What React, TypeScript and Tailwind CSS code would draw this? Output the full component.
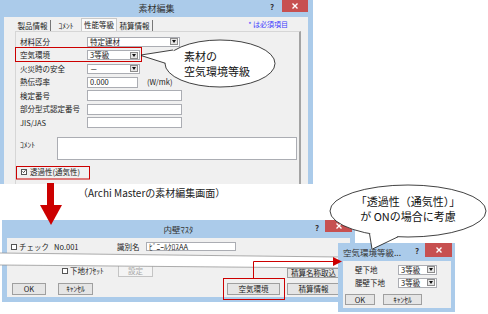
import React from "react";

const Check = ({ on }: { on?: boolean }) => (
  <span className="w-[6px] h-[6px] border border-[#555] bg-white flex items-center justify-center shrink-0">
    {on && (
      <svg width="5" height="5" viewBox="0 0 5 5">
        <path d="M0.6 2.4 L2 3.9 L4.4 0.9" stroke="#222" strokeWidth="1" fill="none" />
      </svg>
    )}
  </span>
);

const Combo = ({ cls, value }: { cls: string; value: string }) => (
  <div className={`flex items-center h-[10px] bg-white border border-[#abadb3] pl-[2px] ${cls}`}>
    <span className="leading-none">{value}</span>
    <span className="ml-auto mr-[1px] w-[8px] h-[7px] bg-[#e6e6e6] border border-[#8c8c8c] flex items-center justify-center">
      <svg width="4" height="3" viewBox="0 0 4 3">
        <path d="M0 0 H4 L2 3 Z" fill="#111" />
      </svg>
    </span>
  </div>
);

const Field = ({ cls, value }: { cls: string; value?: string }) => (
  <div className={`flex items-center h-[11px] bg-white border border-[#abadb3] pl-[2px] leading-none ${cls}`}>
    {value}
  </div>
);

const Btn = ({ cls, label, off }: { cls: string; label: string; off?: boolean }) =>
  off ? (
    <div className={`flex items-center justify-center bg-[#f4f4f4] border border-[#c4c4c4] text-[#a8a8a8] leading-none ${cls}`}>
      {label}
    </div>
  ) : (
    <div className={`flex items-center justify-center bg-[#e5e5e5] border border-[#9f9f9f] text-[#222] leading-none ${cls}`}>
      {label}
    </div>
  );

const CloseX = () => (
  <svg width="6" height="6" viewBox="0 0 6 6">
    <path d="M0.5 0.5 L5.5 5.5 M5.5 0.5 L0.5 5.5" stroke="#fff" strokeWidth="1.4" />
  </svg>
);

const Row = ({ label, children }: { label: string; children: React.ReactNode }) => (
  <div className="flex items-center h-[11px]">
    <span className="w-[71px] pl-[4px] leading-none">{label}</span>
    {children}
  </div>
);

export default function App() {
  return (
    <div className="relative w-[488px] h-[314px] bg-white overflow-hidden whitespace-nowrap font-['Noto_Sans_CJK_JP',sans-serif] text-[7.5px] text-[#222]">
      {/* 素材編集 */}
      <div className="absolute left-0 top-0 w-[313px] h-[184px] bg-[#abcbea] flex flex-col">
        <div className="relative h-[17px] flex items-center justify-center text-[9px] text-[#333]">
          素材編集
          <span className="absolute left-[270px] top-[3px] text-[8px] font-bold leading-none">?</span>
          <span className="absolute left-[282px] top-0 w-[26px] h-[12px] bg-[#c75050] flex items-center justify-center">
            <CloseX />
          </span>
        </div>
        <div className="flex-1 ml-[4px] mr-[5px] bg-[#f0f0f0] flex flex-col">
          <div className="flex items-end h-[14px] pl-[11px]">
            <span className="w-[36px] h-[11px] flex items-center justify-center border-r border-[#777] leading-none">製品情報</span>
            <span className="w-[30px] h-[11px] flex items-center justify-center leading-none">ｺﾒﾝﾄ</span>
            <span className="w-[36px] h-[13px] flex items-center justify-center bg-[#fafafa] border border-b-0 border-[#c9c9c9] leading-none">
              性能等級
            </span>
            <span className="w-[36px] h-[11px] flex items-center justify-center border-r border-[#777] leading-none">積算情報</span>
            <span className="ml-auto mr-[20px] self-center text-[7px] text-[#3c3cff] leading-none">* は必須項目</span>
          </div>
          <div className="ml-[11px] w-[286px] flex-1 border-l border-t border-[#d6d6d6] border-r-2 border-r-[#a3a3a3] pt-[4px] flex flex-col gap-[2.5px]">
            <Row label="材料区分">
              <Combo cls="w-[93px]" value="特定建材" />
            </Row>
            <Row label="空気環境">
              <Combo cls="w-[53px]" value="3等級" />
            </Row>
            <Row label="火災時の安全">
              <Combo cls="w-[53px]" value="－" />
            </Row>
            <Row label="熱伝導率">
              <Field cls="w-[51px]" value="0.000" />
              <span className="ml-[9px] leading-none">(W/mk)</span>
            </Row>
            <Row label="検定番号">
              <Field cls="w-[95px]" />
            </Row>
            <Row label="部分型式認定番号">
              <Field cls="w-[95px]" />
            </Row>
            <Row label="JIS/JAS">
              <Field cls="w-[95px]" />
            </Row>
            <div className="mt-[6px] flex items-start">
              <span className="w-[41px] pl-[4px] pt-[4px] leading-none">ｺﾒﾝﾄ</span>
              <div className="w-[240px] h-[23px] bg-white border border-[#abadb3]" />
            </div>
            <div className="mt-[4px] h-[11px] flex items-center pl-[5px] gap-[3px]">
              <Check on />
              <span className="leading-none">透過性(通気性)</span>
            </div>
          </div>
        </div>
      </div>

      <div className="absolute left-[78px] top-[186px] text-[10px] leading-[14px] text-[#222]">（Archi Masterの素材編集画面）</div>

      {/* 内壁マスタ */}
      <div className="absolute left-[2px] top-[220px] w-[353px] h-[82px] bg-[#abcbea] flex flex-col">
        <div className="relative h-[18px] flex items-center justify-center text-[8.5px] text-[#333]">
          内壁ﾏｽﾀ
          <span className="absolute left-[313px] top-[4px] text-[8px] font-bold leading-none">?</span>
          <span className="absolute left-[323px] top-0 w-[27px] h-[12px] bg-[#c75050] flex items-center justify-center">
            <CloseX />
          </span>
        </div>
        <div className="flex-1 mx-[5px] mb-[5px] bg-[#f0f0f0] flex flex-col">
          <div className="mt-[4px] h-[9px] flex items-center pl-[4px]">
            <Check />
            <span className="w-[37px] pl-[2px] leading-none">チェック</span>
            <span className="w-[63px] leading-none">No.001</span>
            <span className="w-[29px] leading-none">識別名</span>
            <div className="w-[90px] h-[9px] bg-white border border-[#abadb3] pl-[2px] flex items-center leading-none">ﾋﾞﾆｰﾙｸﾛｽAA</div>
          </div>
          <div className="mt-[14px] h-[13px] flex pl-[55px]">
            <div className="flex items-center h-[12px]">
              <Check />
              <span className="w-[50px] pl-[2px] leading-none">下地ｵﾌｾｯﾄ</span>
              <Btn cls="w-[35px] h-[12px]" label="設定" off />
            </div>
            <Btn cls="ml-auto mr-[10px] self-end w-[53px] h-[10px]" label="積算名称取込" />
          </div>
          <div className="mt-[5px] h-[12px] flex pl-[5px]">
            <Btn cls="w-[34px] h-[12px]" label="OK" />
            <Btn cls="ml-[12px] w-[35px] h-[12px]" label="ｷｬﾝｾﾙ" />
            <Btn cls="ml-auto w-[53px] h-[12px]" label="空気環境" />
            <Btn cls="ml-[7px] mr-[10px] w-[53px] h-[12px]" label="積算情報" />
          </div>
        </div>
      </div>

      {/* torn band */}
      <svg className="absolute left-0 top-0 pointer-events-none" width="488" height="314">
        <polygon points="0,253 338,257 338,268 0,265" fill="#fff" />
        <line x1="0" y1="253" x2="338" y2="257" stroke="#8a8a8a" strokeWidth="0.7" />
        <line x1="0" y1="265" x2="338" y2="268" stroke="#8a8a8a" strokeWidth="0.7" />
      </svg>

      {/* 空気環境等級 dialog */}
      <div className="absolute left-[338px] top-[243px] w-[117px] h-[69px] bg-[#abcbea] flex flex-col">
        <div className="relative h-[18px] flex items-center pl-[5px] text-[8.5px] text-[#333]">
          空気環境等級...
          <span className="absolute left-[77px] top-[4px] text-[8px] font-bold leading-none">?</span>
          <span className="absolute left-[87px] top-0 w-[27px] h-[14px] bg-[#c75050] flex items-center justify-center">
            <CloseX />
          </span>
        </div>
        <div className="flex-1 ml-[5px] mr-[4px] mb-[4px] bg-[#f0f0f0] flex flex-col">
          <div className="mt-[4px] h-[9px] flex items-center pl-[12px]">
            <span className="w-[43px] leading-none">壁下地</span>
            <Combo cls="w-[39px]" value="3等級" />
          </div>
          <div className="mt-[4px] h-[9px] flex items-center pl-[12px]">
            <span className="w-[43px] leading-none">腰壁下地</span>
            <Combo cls="w-[39px]" value="3等級" />
          </div>
          <div className="mt-[7px] flex pl-[2px] gap-[8px]">
            <Btn cls="w-[30px] h-[11px]" label="OK" />
            <Btn cls="w-[39px] h-[11px]" label="ｷｬﾝｾﾙ" />
          </div>
        </div>
      </div>

      {/* annotations */}
      <svg className="absolute left-0 top-0 pointer-events-none" width="488" height="314">
        <rect x="15.5" y="47.5" width="126" height="14" fill="none" stroke="#cc0000" strokeWidth="1" />
        <rect x="16.5" y="166.5" width="73" height="12.5" fill="none" stroke="#cc0000" strokeWidth="1" />
        <rect x="223.5" y="278.5" width="61" height="21" fill="none" stroke="#cc0000" strokeWidth="1" />

        <rect x="47" y="183" width="7" height="23" fill="#cc0000" />
        <polygon points="40,205 62,205 51,225" fill="#cc0000" />

        <polyline points="253.5,278 253.5,261.5 334,261.5" fill="none" stroke="#cc0000" strokeWidth="1" />
        <polygon points="333,257 342,261.5 333,266" fill="#cc0000" />

        <ellipse cx="220" cy="63.5" rx="55" ry="23.5" fill="#fff" stroke="#111" strokeWidth="0.8" />
        <polygon points="141,55 173,50 178,58 166,63.5" fill="#fff" />
        <line x1="141" y1="55" x2="173" y2="50" stroke="#111" strokeWidth="0.8" />
        <line x1="141" y1="55.5" x2="165.5" y2="63.3" stroke="#111" strokeWidth="0.8" />

        <ellipse cx="408" cy="211" rx="78" ry="26" fill="#fff" stroke="#111" strokeWidth="0.8" />
        <polygon points="372,249 369.5,233.5 384,230 398,236.8" fill="#fff" />
        <line x1="369.5" y1="233.6" x2="372" y2="249" stroke="#111" strokeWidth="0.8" />
        <line x1="398" y1="236.8" x2="372.5" y2="249" stroke="#111" strokeWidth="0.8" />
      </svg>

      <div className="absolute left-[184px] top-[49px] text-[11px] leading-[15px] text-[#111]">
        <div>素材の</div>
        <div>空気環境等級</div>
      </div>
      <div className="absolute left-[330px] top-[194px] w-[156px] text-center text-[11px] leading-[15px] text-[#111]">
        <div>「透過性（通気性）」</div>
        <div>が ONの場合に考慮</div>
      </div>
    </div>
  );
}
